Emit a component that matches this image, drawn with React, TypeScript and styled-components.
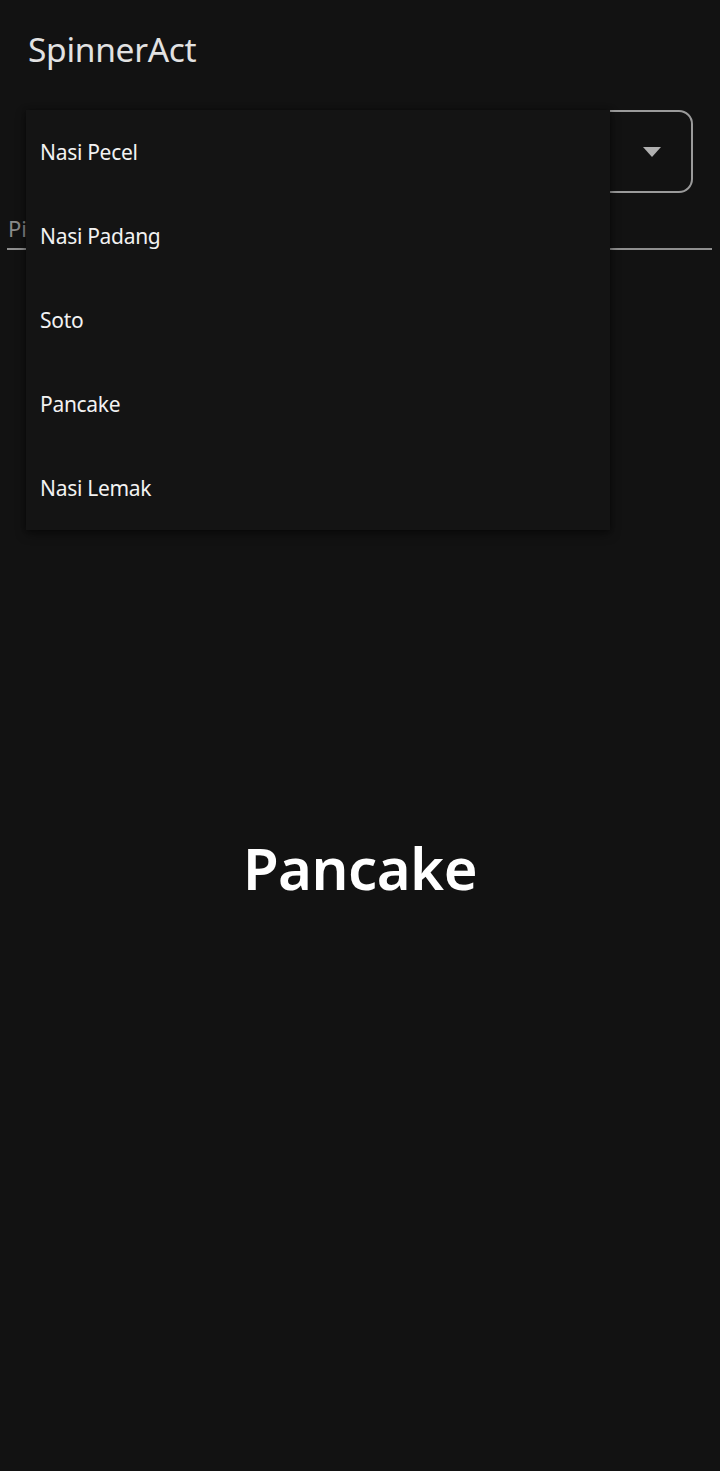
import React from "react";
import styled, { createGlobalStyle } from "styled-components";

const Global = createGlobalStyle`
  html, body { margin: 0; padding: 0; background: #121212; }
  body { font-family: "Noto Sans", "Open Sans", sans-serif; }
`;

const Page = styled.div`
  position: relative;
  width: 720px;
  height: 1471px;
  background: #121212;
  overflow: hidden;
`;

const TopBar = styled.header`
  height: 100px;
  display: flex;
  align-items: center;
  padding: 0 28px;
  box-sizing: border-box;
`;

const Title = styled.h1`
  margin: 0;
  margin-top: -2px;
  font-size: 33.5px;
  font-weight: 400;
  color: #e2e2e2;
  letter-spacing: -0.3px;
`;

const SpinnerBox = styled.div`
  margin: 10px 27px 0 26px;
  height: 83px;
  box-sizing: border-box;
  border: 2px solid #9a9a9a;
  border-radius: 14px;
  display: flex;
  align-items: center;
  justify-content: flex-end;
  padding-right: 30px;
`;

const Arrow = styled.svg`
  width: 18px;
  height: 10px;
  display: block;
`;

const Field = styled.div`
  margin: 17px 8px 0 7px;
  height: 38px;
  border-bottom: 2px solid #8f8f8f;
  display: flex;
  align-items: flex-start;
  padding-left: 1px;
`;

const Hint = styled.span`
  font-size: 22px;
  color: #8a8a8a;
  line-height: 36px;
`;

const Result = styled.div`
  margin-top: 578px;
  text-align: center;
  font-size: 58px;
  font-weight: 600;
  color: #ffffff;
  letter-spacing: -0.5px;
  line-height: 80px;
`;

const Menu = styled.ul`
  position: absolute;
  top: 110px;
  left: 26px;
  width: 584px;
  margin: 0;
  padding: 0;
  list-style: none;
  background: #141414;
  box-shadow: 0 4px 10px rgba(0, 0, 0, 0.45), 0 0 4px rgba(0, 0, 0, 0.3);
`;

const MenuItem = styled.li`
  height: 84px;
  display: flex;
  align-items: center;
  padding-left: 14px;
  font-size: 21px;
  color: #f2f2f2;
  letter-spacing: -0.3px;
`;

const items = ["Nasi Pecel", "Nasi Padang", "Soto", "Pancake", "Nasi Lemak"];

export default function App() {
  return (
    <Page>
      <Global />
      <TopBar>
        <Title>SpinnerAct</Title>
      </TopBar>
      <SpinnerBox>
        <Arrow viewBox="0 0 18 10">
          <path d="M0 0 L18 0 L9 10 Z" fill="#b0b0b0" />
        </Arrow>
      </SpinnerBox>
      <Field>
        <Hint>Pilih makanan</Hint>
      </Field>
      <Result>Pancake</Result>
      <Menu>
        {items.map((it) => (
          <MenuItem key={it}>{it}</MenuItem>
        ))}
      </Menu>
    </Page>
  );
}
